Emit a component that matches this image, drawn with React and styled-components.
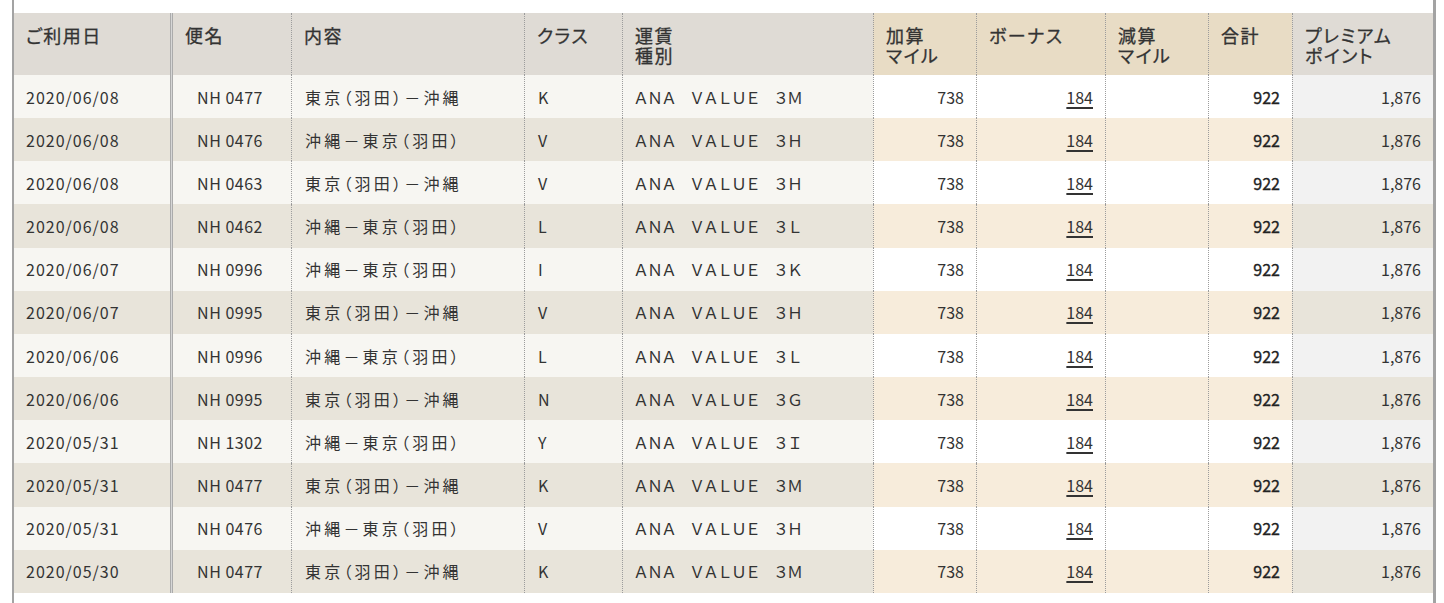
import React from 'react';
import styled, { createGlobalStyle, css } from 'styled-components';

const GlobalStyle = createGlobalStyle`
  html, body { margin: 0; padding: 0; background: #ffffff; }
  body {
    font-family: "Noto Sans CJK JP", "Noto Sans", sans-serif;
    color: #333;
  }
`;

const Frame = styled.div`
  box-sizing: border-box;
  width: 1424px;
  min-height: 603px;
  margin-left: 12px;
  padding-top: 13px;
  border-left: 2px solid #a3a3a3;
  border-right: 3px solid #a3a3a3;
`;

const Table = styled.table`
  width: 1419px;
  table-layout: fixed;
  border-collapse: separate;
  border-spacing: 0;
`;

const divider = ({ $div }) => {
  if ($div === 'double')
    return css`
      border-right: 1px solid #ababab;
      box-shadow: inset -1px 0 0 #d6d6d6, inset -2px 0 0 #ababab;
    `;
  if ($div === 'dotted')
    return css`
      border-left: 1px dotted #9c9c9c;
    `;
  return '';
};

const HeadCell = styled.th`
  box-sizing: border-box;
  width: ${(p) => p.$w}px;
  height: 62px;
  padding: 12px 6px 0 12px;
  vertical-align: top;
  text-align: left;
  font-size: 18px;
  line-height: 20px;
  font-weight: 400;
  font-feature-settings: "palt";
  letter-spacing: 1.5px;
  -webkit-text-stroke: 0.3px #333;
  color: #333;
  background: ${(p) => (p.$tone === 'tan' ? '#e8dcc5' : '#dfdbd5')};
  ${divider}
`;

const palette = {
  base: ['#f7f6f2', '#e8e4da'],
  tan: ['#ffffff', '#f7ecdb'],
  point: ['#f2f2f2', '#e8e4da'],
};

const Cell = styled.td`
  box-sizing: border-box;
  height: 43.1667px;
  padding: 0 ${(p) => p.$pr ?? 12}px 0 ${(p) => p.$pl ?? 12}px;
  vertical-align: middle;
  text-align: ${(p) => p.$align || 'left'};
  font-size: 16px;
  line-height: 20px;
  white-space: nowrap;
  color: #333;
  background: ${(p) => palette[p.$tone || 'base'][p.$even ? 1 : 0]};
  ${divider}
`;

const Plain = styled.span`
  letter-spacing: ${(p) => p.$ls ?? 0}px;
`;

const Route = styled.span`
  font-feature-settings: "palt";
  letter-spacing: 3.2px;
`;

const Fare = styled.span`
  letter-spacing: -2px;
`;

const Bonus = styled.a`
  color: #333;
  text-decoration: underline;
  text-decoration-thickness: 2px;
  text-underline-offset: 3px;
  cursor: pointer;
`;

const Total = styled.span`
  -webkit-text-stroke: 0.35px #222;
  color: #222;
`;

const columns = [
  { w: 159, tone: 'gray', div: 'double', label: ['ご利用日'] },
  { w: 118, tone: 'gray', label: ['便名'] },
  { w: 233, tone: 'gray', div: 'dotted', label: ['内容'] },
  { w: 98, tone: 'gray', div: 'dotted', label: ['クラス'] },
  { w: 251, tone: 'gray', div: 'dotted', label: ['運賃', '種別'] },
  { w: 103, tone: 'tan', div: 'dotted', label: ['加算', 'マイル'] },
  { w: 129, tone: 'tan', div: 'dotted', label: ['ボーナス'] },
  { w: 103, tone: 'tan', div: 'dotted', label: ['減算', 'マイル'] },
  { w: 84, tone: 'tan', div: 'dotted', label: ['合計'] },
  { w: 141, tone: 'gray', div: 'dotted', label: ['プレミアム', 'ポイント'] },
];

const OUT = '東京（羽田）－沖縄';
const BACK = '沖縄－東京（羽田）';

const rows = [
  ['2020/06/08', 'NH 0477', OUT, 'K', '３Ｍ'],
  ['2020/06/08', 'NH 0476', BACK, 'V', '３Ｈ'],
  ['2020/06/08', 'NH 0463', OUT, 'V', '３Ｈ'],
  ['2020/06/08', 'NH 0462', BACK, 'L', '３Ｌ'],
  ['2020/06/07', 'NH 0996', BACK, 'I', '３Ｋ'],
  ['2020/06/07', 'NH 0995', OUT, 'V', '３Ｈ'],
  ['2020/06/06', 'NH 0996', BACK, 'L', '３Ｌ'],
  ['2020/06/06', 'NH 0995', OUT, 'N', '３Ｇ'],
  ['2020/05/31', 'NH 1302', BACK, 'Y', '３Ｉ'],
  ['2020/05/31', 'NH 0477', OUT, 'K', '３Ｍ'],
  ['2020/05/31', 'NH 0476', BACK, 'V', '３Ｈ'],
  ['2020/05/30', 'NH 0477', OUT, 'K', '３Ｍ'],
];

export default function App() {
  return (
    <>
      <GlobalStyle />
      <Frame>
        <Table>
          <thead>
            <tr>
              {columns.map((c, i) => (
                <HeadCell key={i} $w={c.w} $tone={c.tone} $div={c.div}>
                  {c.label.map((l, j) => (
                    <React.Fragment key={j}>
                      {j > 0 && <br />}
                      {l}
                    </React.Fragment>
                  ))}
                </HeadCell>
              ))}
            </tr>
          </thead>
          <tbody>
            {rows.map(([date, flight, route, cls, fare], i) => {
              const even = i % 2 === 1;
              return (
                <tr key={i}>
                  <Cell $even={even} $div="double">
                    <Plain $ls={1}>{date}</Plain>
                  </Cell>
                  <Cell $even={even} $align="center" $pr={14} $pl={10}>
                    <Plain $ls={0.5}>{flight}</Plain>
                  </Cell>
                  <Cell $even={even} $div="dotted" $pl={13}>
                    <Route>{route}</Route>
                  </Cell>
                  <Cell $even={even} $div="dotted" $pl={13}>
                    {cls}
                  </Cell>
                  <Cell $even={even} $div="dotted" $pl={10}>
                    <Fare>{`ＡＮＡ　ＶＡＬＵＥ　${fare}`}</Fare>
                  </Cell>
                  <Cell $even={even} $tone="tan" $div="dotted" $align="right">
                    738
                  </Cell>
                  <Cell $even={even} $tone="tan" $div="dotted" $align="right">
                    <Bonus>184</Bonus>
                  </Cell>
                  <Cell $even={even} $tone="tan" $div="dotted" $align="right" />
                  <Cell $even={even} $tone="tan" $div="dotted" $align="right">
                    <Total>922</Total>
                  </Cell>
                  <Cell $even={even} $tone="point" $div="dotted" $align="right">
                    1,876
                  </Cell>
                </tr>
              );
            })}
          </tbody>
        </Table>
      </Frame>
    </>
  );
}
